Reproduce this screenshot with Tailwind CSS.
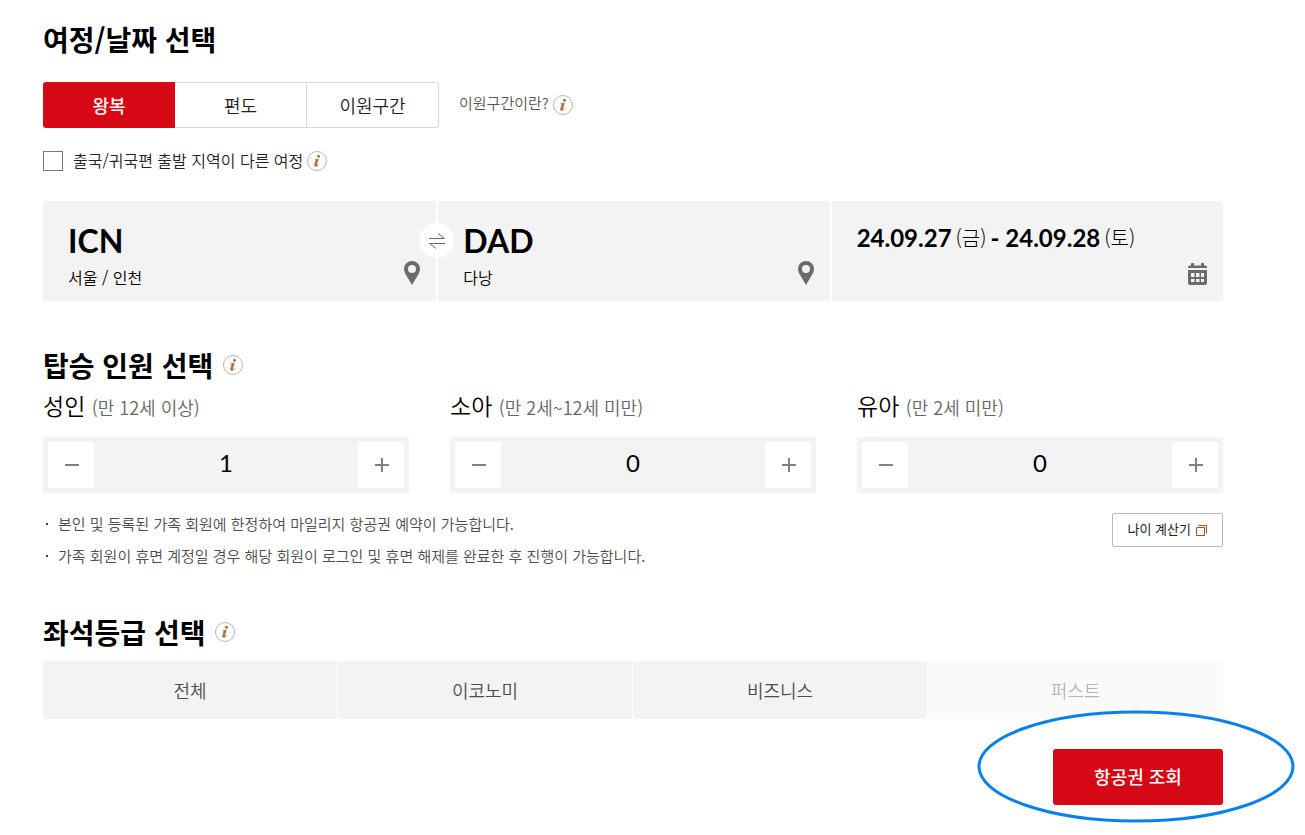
<!DOCTYPE html>
<html lang="ko">
  <head>
    <meta charset="UTF-8" />
    <meta name="viewport" content="width=device-width, initial-scale=1.0" />
    <title>마일리지 항공권 예약</title>
    <script src="https://cdn.jsdelivr.net/npm/@tailwindcss/browser@4"></script>
  </head>
  <body class="min-h-screen overflow-x-hidden bg-white font-['Noto_Sans_CJK_KR',sans-serif] font-[350] text-black">

    <!-- Shared icons -->
    <svg class="hidden">
      <symbol id="icon-info" viewBox="0 0 20 20">
        <circle cx="10" cy="10" r="9.5" fill="#fff" stroke="#b9b4b0" />
        <circle cx="11.5" cy="5.300" r="1.500" fill="#b0703c" />
        <path d="M7.500 8.400l4.200-.6-1.700 6c-.1.5.2.6.5.3l.9-.9.4.4c-.9 1.400-2 2.100-3.200 2.100-1.200 0-1.600-.9-1.300-1.900l1.200-4.200c.1-.3 0-.5-1-.6z" fill="#b0703c" />
      </symbol>
      <symbol id="icon-pin" viewBox="0 0 16 24">
        <path fill-rule="evenodd" d="M8 0a8 8 0 0 0-8 8c0 1.600.5 3 1.200 4.400L8 24l6.800-11.600C15.500 11 16 9.600 16 8a8 8 0 0 0-8-8zm0 4a4 4 0 1 1 0 8 4 4 0 0 1 0-8z" fill="#6b6b6b" />
      </symbol>
    </svg>

    <main class="mr-[82px] ml-[43px] max-w-[1180px] pt-[19px] pb-7">
      <!-- Trip / date -->
      <section>
        <h2 class="text-[28px] leading-10 font-bold">여정/날짜 선택</h2>

        <div class="mt-[23px] flex items-center">
          <div class="grid h-[46px] w-[396px] grid-cols-3 text-lg">
            <button type="button" class="rounded-l-[3px] bg-[#d60815] font-medium text-white">왕복</button>
            <button type="button" class="border-y border-r border-[#d9d9d9] text-[#222]">편도</button>
            <button type="button" class="rounded-r-[3px] border-y border-r border-[#d9d9d9] text-[#222]">이원구간</button>
          </div>
          <a href="#" class="ml-5 flex items-center gap-1 text-[15px] text-[#555]">
            <span class="pb-1 leading-6">이원구간이란?</span>
            <svg class="size-5"><use href="#icon-info" /></svg>
          </a>
        </div>

        <div class="mt-[20px] flex items-center">
          <input id="open-jaw" type="checkbox" class="size-5 appearance-none border border-[#777] bg-white checked:bg-[#d60815]" />
          <label for="open-jaw" class="pr-1 pb-[2px] pl-[10px] leading-6 text-[#222]">출국/귀국편 출발 지역이 다른 여정</label>
          <button type="button" aria-label="도움말"><svg class="size-5"><use href="#icon-info" /></svg></button>
        </div>

        <div class="mt-[27px] grid h-[100px] grid-cols-3">
          <div class="relative bg-[#f3f3f3] px-[25px] pt-5">
            <p class="font-['Lato',sans-serif] text-[32px] leading-10 font-bold">ICN</p>
            <p class="leading-8">서울 / 인천</p>
            <svg class="absolute right-4 bottom-4 h-6 w-4"><use href="#icon-pin" /></svg>
            <button type="button" aria-label="출발지 도착지 변경" class="absolute top-[22px] -right-[18px] z-10 flex size-[35px] items-center justify-center rounded-full bg-white">
              <svg class="h-4 w-4" viewBox="0 0 16 16" fill="none" stroke="#6b6b6b"><path d="M0 5.500h15.500L9 .5M16 10.500H.5L7 15.500" /></svg>
            </button>
          </div>
          <div class="relative border-l-2 border-white bg-[#f3f3f3] px-[25px] pt-5">
            <p class="font-['Lato',sans-serif] text-[32px] leading-10 font-bold">DAD</p>
            <p class="leading-8">다낭</p>
            <svg class="absolute right-4 bottom-4 h-6 w-4"><use href="#icon-pin" /></svg>
          </div>
          <div class="relative border-l-2 border-white bg-[#f3f3f3] px-[25px] pt-5">
            <p class="flex items-center gap-1 font-['Lato',sans-serif] text-2xl leading-[34px] font-bold">
              24.09.27 <span class="font-['Noto_Sans_CJK_KR',sans-serif] text-xl font-light">(금)</span> - 24.09.28 <span class="font-['Noto_Sans_CJK_KR',sans-serif] text-xl font-light">(토)</span>
            </p>
            <svg class="absolute right-4 bottom-4 h-[22px] w-[19px]" viewBox="0 0 19 22">
              <path d="M0 5V4a1.500 1.500 0 0 1 1.500-1.500H3V1a1 1 0 0 1 3 0v1.500h7V1a1 1 0 0 1 3 0v1.500h1.500A1.500 1.500 0 0 1 19 4v1z" fill="#6b6b6b" />
              <path fill-rule="evenodd" d="M0 7h19v13a2 2 0 0 1-2 2H2a2 2 0 0 1-2-2zM3 10v4h3.500v-4zm5 0v4h3.500v-4zm5 0v4h3v-4zM3 16v3h3.500v-3zm5 0v3h3.500v-3zm5 0v3h3v-3z" fill="#6b6b6b" />
            </svg>
          </div>
        </div>
      </section>

      <!-- Passengers -->
      <section class="mt-11">
        <div class="flex items-center gap-[10px]">
          <h2 class="text-[28px] leading-10 font-bold">탑승 인원 선택</h2>
          <button type="button" aria-label="도움말"><svg class="size-5"><use href="#icon-info" /></svg></button>
        </div>

        <div class="grid grid-cols-3 gap-x-[41px]">
          <div>
            <label for="adult" class="block text-[23px] leading-10">성인 <span class="text-lg text-[#666]">(만 12세 이상)</span></label>
            <div class="mt-3 flex h-14 bg-[#f3f3f3] p-[5px]">
              <button type="button" aria-label="성인 빼기" class="flex w-[46px] shrink-0 items-center justify-center bg-white"><svg class="size-4" viewBox="0 0 16 16" stroke="#808080" stroke-width="2"><path d="M2 8h14" /></svg></button>
              <input id="adult" type="text" value="1" class="w-full min-w-0 bg-transparent pb-1 text-center font-['Lato',sans-serif] text-2xl font-normal" />
              <button type="button" aria-label="성인 더하기" class="flex w-[46px] shrink-0 items-center justify-center bg-white"><svg class="size-4" viewBox="0 0 16 16" stroke="#808080" stroke-width="2"><path d="M2 8h14M9 1v14" /></svg></button>
            </div>
          </div>
          <div>
            <label for="child" class="block text-[23px] leading-10">소아 <span class="text-lg text-[#666]">(만 2세~12세 미만)</span></label>
            <div class="mt-3 flex h-14 bg-[#f3f3f3] p-[5px]">
              <button type="button" aria-label="소아 빼기" class="flex w-[46px] shrink-0 items-center justify-center bg-white"><svg class="size-4" viewBox="0 0 16 16" stroke="#808080" stroke-width="2"><path d="M2 8h14" /></svg></button>
              <input id="child" type="text" value="0" class="w-full min-w-0 bg-transparent pb-1 text-center font-['Lato',sans-serif] text-2xl font-normal" />
              <button type="button" aria-label="소아 더하기" class="flex w-[46px] shrink-0 items-center justify-center bg-white"><svg class="size-4" viewBox="0 0 16 16" stroke="#808080" stroke-width="2"><path d="M2 8h14M9 1v14" /></svg></button>
            </div>
          </div>
          <div>
            <label for="infant" class="block text-[23px] leading-10">유아 <span class="text-lg text-[#666]">(만 2세 미만)</span></label>
            <div class="mt-3 flex h-14 bg-[#f3f3f3] p-[5px]">
              <button type="button" aria-label="유아 빼기" class="flex w-[46px] shrink-0 items-center justify-center bg-white"><svg class="size-4" viewBox="0 0 16 16" stroke="#808080" stroke-width="2"><path d="M2 8h14" /></svg></button>
              <input id="infant" type="text" value="0" class="w-full min-w-0 bg-transparent pb-1 text-center font-['Lato',sans-serif] text-2xl font-normal" />
              <button type="button" aria-label="유아 더하기" class="flex w-[46px] shrink-0 items-center justify-center bg-white"><svg class="size-4" viewBox="0 0 16 16" stroke="#808080" stroke-width="2"><path d="M2 8h14M9 1v14" /></svg></button>
            </div>
          </div>
        </div>

        <div class="mt-[15px] flex items-start justify-between">
          <ul class="text-[15px] leading-8 text-[#4d4d4d]">
            <li class="flex items-center gap-[10px] pl-[3px]"><span class="size-[2px] bg-[#444]"></span>본인 및 등록된 가족 회원에 한정하여 마일리지 항공권 예약이 가능합니다.</li>
            <li class="flex items-center gap-[10px] pl-[3px]"><span class="size-[2px] bg-[#444]"></span>가족 회원이 휴면 계정일 경우 해당 회원이 로그인 및 휴면 해제를 완료한 후 진행이 가능합니다.</li>
          </ul>
          <button type="button" class="mt-[5px] flex h-[34px] items-center gap-[5px] rounded-xs border border-[#bbb] px-[15px] text-[13px] font-normal text-[#222]">
            <span class="pb-[2px]">나이 계산기</span>
            <svg class="size-[11px]" viewBox="0 0 11 11" fill="none" stroke="#9a5520"><path d="M.5 2.500h8v8h-8zM2.500.5h8v8" /></svg>
          </button>
        </div>
      </section>

      <!-- Cabin class -->
      <section class="mt-10">
        <div class="flex items-center gap-[10px]">
          <h2 class="text-[28px] leading-10 font-bold">좌석등급 선택</h2>
          <button type="button" aria-label="도움말"><svg class="size-5"><use href="#icon-info" /></svg></button>
        </div>

        <div class="mt-[9px] grid h-[58px] grid-cols-4 text-lg text-[#4d4d4d]">
          <button type="button" class="border-r border-white bg-[#f3f3f3]">전체</button>
          <button type="button" class="border-r border-white bg-[#f3f3f3]">이코노미</button>
          <button type="button" class="border-r border-white bg-[#f3f3f3]">비즈니스</button>
          <button type="button" disabled class="bg-[#fafafa] text-[#b5b5b5]">퍼스트</button>
        </div>
      </section>

      <div class="mt-[30px] flex justify-end">
        <div class="relative">
          <button type="submit" class="h-14 w-[170px] rounded-[3px] bg-[#d60815] pb-[2px] text-lg font-medium text-white">항공권 조회</button>
          <svg class="pointer-events-none absolute -top-[39px] -left-[76px] h-[113px] w-[318px]" viewBox="0 0 318 113" fill="none"><ellipse cx="159" cy="56.500" rx="157" ry="54.500" stroke="#0a80ee" stroke-width="3" /></svg>
        </div>
      </div>
    </main>
  </body>
</html>
